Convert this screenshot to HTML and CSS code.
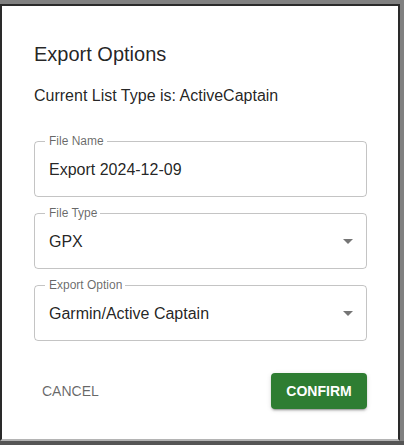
FILE: index.html
```html
<!DOCTYPE html>
<html>
<head>
<meta charset="utf-8">
<link rel="stylesheet" href="styles.css">
</head>
<body>
<div class="frame">
  <div class="dialog">
    <h2 class="title">Export Options</h2>
    <p class="subtitle">Current List Type is: ActiveCaptain</p>
    <div class="fields">
      <div class="field">
        <span class="label">File Name</span>
        <span class="value">Export 2024-12-09</span>
      </div>
      <div class="field">
        <span class="label">File Type</span>
        <span class="value">GPX</span>
        <svg class="arrow" viewBox="0 0 24 24" width="24" height="24"><path d="M7 10l5 5 5-5z"/></svg>
      </div>
      <div class="field">
        <span class="label">Export Option</span>
        <span class="value">Garmin/Active Captain</span>
        <svg class="arrow" viewBox="0 0 24 24" width="24" height="24"><path d="M7 10l5 5 5-5z"/></svg>
      </div>
    </div>
    <div class="actions">
      <button class="btn btn-text">CANCEL</button>
      <button class="btn btn-contained">CONFIRM</button>
    </div>
  </div>
</div>
</body>
</html>
```
FILE: styles.css
```css
* { box-sizing: border-box; }
html, body { margin: 0; padding: 0; }
body {
  background: #555555;
  font-family: "Liberation Sans", Arial, sans-serif;
  height: 445px;
  overflow: hidden;
}
.frame {
  background: #808080;
  padding: 4px 4px 0 0;
}
.dialog {
  background: #ffffff;
  border: 2px solid #2a2a2a;
  border-bottom: 2px solid #b4b4b4;
  padding: 32px 31px 30px 32px;
  display: flex;
  flex-direction: column;
}
.title {
  margin: 0;
  font-size: 20px;
  line-height: 32px;
  font-weight: 400;
  color: rgba(0, 0, 0, 0.87);
}
.subtitle {
  margin: 14px 0 0;
  font-size: 16px;
  line-height: 24px;
  color: rgba(0, 0, 0, 0.87);
}
.fields {
  margin-top: 33px;
  display: flex;
  flex-direction: column;
  gap: 16px;
}
.field {
  position: relative;
  height: 56px;
  border: 1px solid rgba(0, 0, 0, 0.23);
  border-radius: 4px;
  padding: 0 14px;
  display: flex;
  align-items: center;
}
.label {
  position: absolute;
  top: -8px;
  left: 10px;
  padding: 0 3px 0 4px;
  background: #ffffff;
  font-size: 12px;
  line-height: 14px;
  color: rgba(0, 0, 0, 0.6);
}
.value {
  font-size: 16px;
  line-height: 23px;
  color: rgba(0, 0, 0, 0.87);
  padding-top: 1px;
}
.arrow {
  position: absolute;
  right: 6px;
  top: 15px;
  fill: rgba(0, 0, 0, 0.54);
}
.actions {
  margin-top: 32px;
  display: flex;
  justify-content: space-between;
  align-items: center;
}
.btn {
  font-family: "Liberation Sans", Arial, sans-serif;
  font-size: 14px;
  line-height: 24px;
  border: none;
  border-radius: 4px;
  cursor: pointer;
  margin: 0;
}
.btn-text {
  background: transparent;
  color: rgba(0, 0, 0, 0.6);
  padding: 6px 8px;
  height: 36px;
}
.btn-contained {
  background: #2e7d32;
  color: #ffffff;
  font-weight: 700;
  width: 96px;
  height: 36px;
  padding: 6px 0;
  box-shadow: 0 3px 1px -2px rgba(0,0,0,0.2), 0 2px 2px 0 rgba(0,0,0,0.14), 0 1px 5px 0 rgba(0,0,0,0.12);
}
```
